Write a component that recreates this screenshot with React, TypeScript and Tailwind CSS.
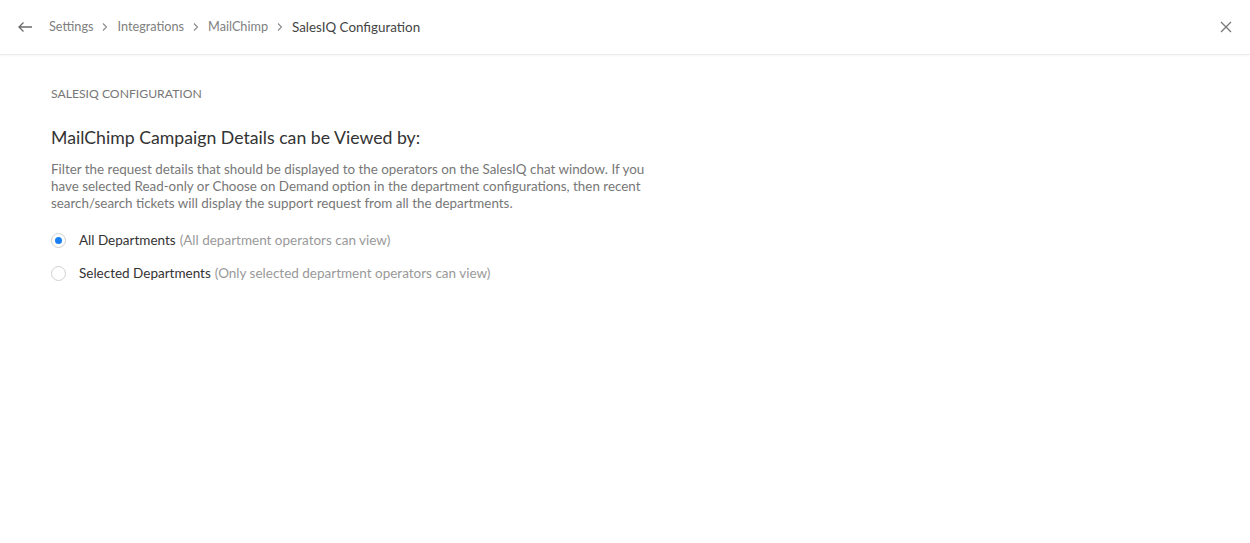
import React from "react";

const font = { fontFamily: "Lato, 'Open Sans', sans-serif" };

function Chevron() {
  return (
    <svg width="8" height="10" viewBox="0 0 8 10" className="mx-[8px]">
      <path d="M2 1.5 L5.5 5 L2 8.5" fill="none" stroke="#8a8a8a" strokeWidth="1.1" />
    </svg>
  );
}

export default function App() {
  return (
    <div className="w-[1250px] h-[543px] bg-white flex flex-col" style={font}>
      <div className="h-[55px] flex items-center border-b border-[#ececec] shadow-[0_1px_2px_rgba(0,0,0,0.04)] pl-[17px] pr-[18px]">
        <svg width="16" height="12" viewBox="0 0 16 12" className="mr-[16px]">
          <path d="M15 6 H2 M6.5 1.5 L2 6 L6.5 10.5" fill="none" stroke="#6b6b6b" strokeWidth="1.3" />
        </svg>
        <div className="flex items-center text-[12.7px] text-[#808080]">
          <span>Settings</span>
          <Chevron />
          <span>Integrations</span>
          <Chevron />
          <span>MailChimp</span>
          <Chevron />
          <span className="text-[#444] text-[13.4px]">SalesIQ Configuration</span>
        </div>
        <div className="flex-1" />
        <svg width="12" height="12" viewBox="0 0 12 12">
          <path d="M1 1 L11 11 M11 1 L1 11" fill="none" stroke="#777" strokeWidth="1.3" />
        </svg>
      </div>
      <div className="pl-[51px] pt-[32px]">
        <div className="text-[12.2px] text-[#777] leading-[14px]">SALESIQ CONFIGURATION</div>
        <div className="mt-[25px] text-[17.7px] text-[#333] leading-[24px]">MailChimp Campaign Details can be Viewed by:</div>
        <div className="mt-[11px] w-[610px] text-[13.4px] text-[#777] leading-[17px]">
          Filter the request details that should be displayed to the operators on the SalesIQ chat window. If you have selected Read-only or Choose on Demand option in the department configurations, then recent search/search tickets will display the support request from all the departments.
        </div>
        <div className="mt-[20px] flex flex-col gap-[17px] text-[13.5px]">
          <div className="flex items-center h-[16px]">
            <span className="w-[15px] h-[15px] rounded-full border border-[#d0d0d0] flex items-center justify-center mr-[13px]">
              <span className="w-[7px] h-[7px] rounded-full bg-[#1a7ff0]" />
            </span>
            <span className="text-[#333]">All Departments</span>
            <span className="text-[#999] ml-[4px]">(All department operators can view)</span>
          </div>
          <div className="flex items-center h-[16px]">
            <span className="w-[15px] h-[15px] rounded-full border border-[#d0d0d0] mr-[13px]" />
            <span className="text-[#333]">Selected Departments</span>
            <span className="text-[#999] ml-[4px]">(Only selected department operators can view)</span>
          </div>
        </div>
      </div>
    </div>
  );
}
